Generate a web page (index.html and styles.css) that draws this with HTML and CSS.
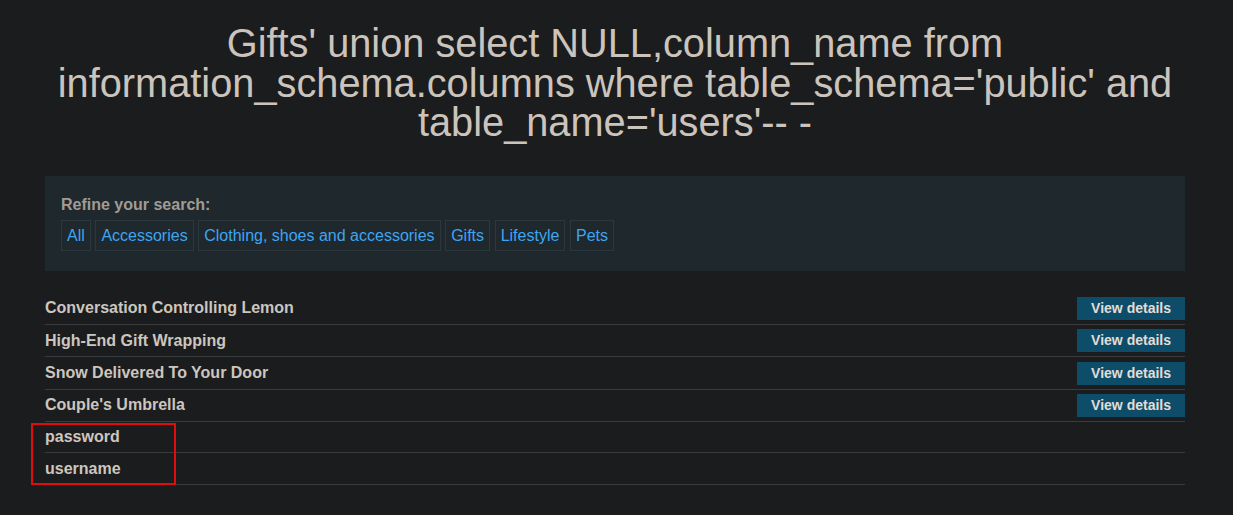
FILE: index.html
```html
<!DOCTYPE html>
<html lang="en">
<head>
<meta charset="utf-8">
<title>Gifts</title>
<link rel="stylesheet" href="styles.css">
</head>
<body>
<main class="container">
  <h1 class="title">Gifts' union select NULL,column_name from information_schema.columns where table_schema='public' and table_name='users'-- -</h1>
  <section class="filters">
    <div class="filters-label">Refine your search:</div>
    <div class="filter-list">
      <a class="filter" href="#">All</a>
      <a class="filter" href="#">Accessories</a>
      <a class="filter" href="#">Clothing, shoes and accessories</a>
      <a class="filter" href="#">Gifts</a>
      <a class="filter" href="#">Lifestyle</a>
      <a class="filter" href="#">Pets</a>
    </div>
  </section>
  <div class="results">
    <div class="row"><span class="name">Conversation Controlling Lemon</span><a class="btn" href="#">View details</a></div>
    <div class="row"><span class="name">High-End Gift Wrapping</span><a class="btn" href="#">View details</a></div>
    <div class="row"><span class="name">Snow Delivered To Your Door</span><a class="btn" href="#">View details</a></div>
    <div class="row"><span class="name">Couple's Umbrella</span><a class="btn" href="#">View details</a></div>
    <div class="row row-plain"><span class="name">password</span></div>
    <div class="row row-plain"><span class="name">username</span></div>
    <div class="highlight"></div>
  </div>
</main>
</body>
</html>
```
FILE: styles.css
```css
html, body {
  margin: 0;
  padding: 0;
  background: #1b1c1e;
}
body {
  font-family: "Liberation Sans", Arial, sans-serif;
  color: #cdc6be;
}
.container {
  width: 1140px;
  margin: 0 0 0 45px;
  padding-bottom: 30px;
}
.title {
  margin: 24px 0 0;
  font-size: 39.75px;
  line-height: 39.6px;
  font-weight: normal;
  text-align: center;
  color: #cbc4bc;
}
.filters {
  margin-top: 33px;
  background: #1e282d;
  padding: 19px 16px 20px;
}
.filters-label {
  font-size: 16px;
  line-height: 19px;
  font-weight: bold;
  color: #a29b94;
  margin-bottom: 6px;
}
.filter-list {
  display: flex;
  gap: 4.6px;
}
.filter {
  display: block;
  border: 1px solid #2c383d;
  padding: 0 5px;
  height: 29px;
  line-height: 29px;
  font-size: 16px;
  color: #3ea5f2;
  text-decoration: none;
}
.results {
  position: relative;
  margin-top: 22px;
}
.row {
  display: flex;
  align-items: center;
  justify-content: space-between;
  height: 31.3px;
  border-bottom: 1px solid #3a3b3d;
}
.row-plain {
  height: 30.5px;
}
.name {
  font-size: 16px;
  font-weight: bold;
  color: #cdc6be;
}
.btn {
  display: block;
  height: 23px;
  line-height: 23px;
  padding: 0 14px;
  background: #0d4d6a;
  color: #e2ddd6;
  font-size: 14px;
  font-weight: bold;
  text-decoration: none;
}
.highlight {
  position: absolute;
  left: -14px;
  top: 130px;
  width: 141px;
  height: 58px;
  border: 2px solid #e30b0b;
}
```
